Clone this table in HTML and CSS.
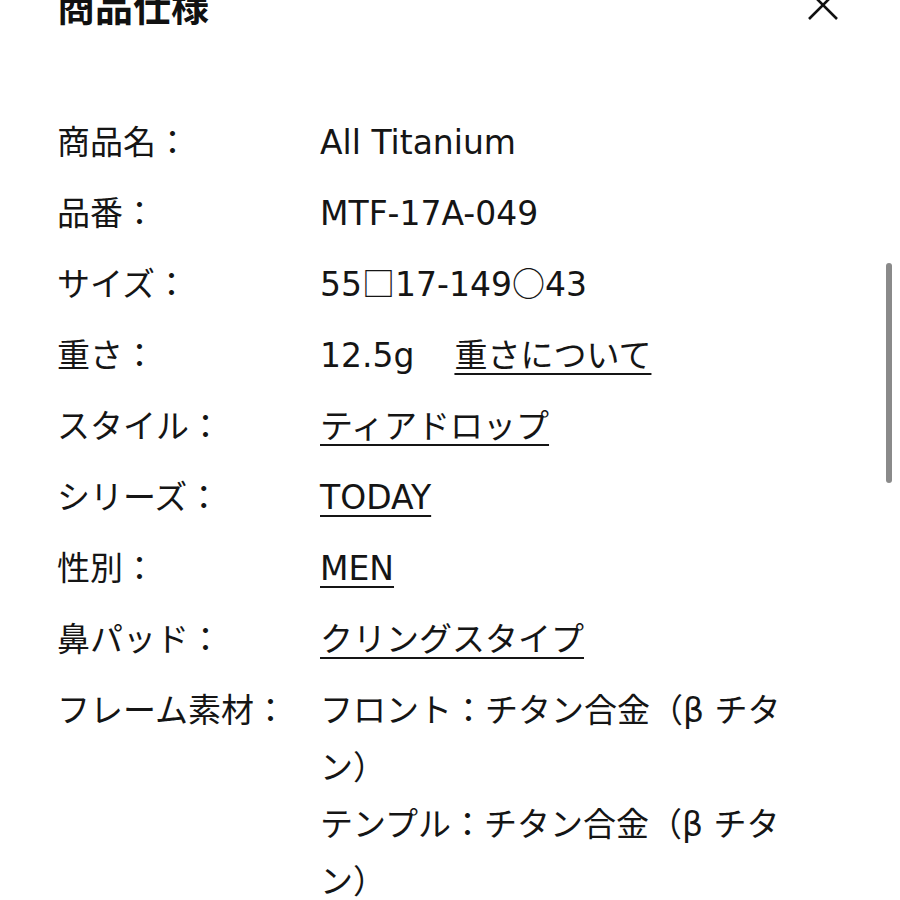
FILE: index.html
```html
<!DOCTYPE html>
<html lang="ja">
<head>
<meta charset="utf-8">
<link rel="stylesheet" href="styles.css">
</head>
<body>
<div class="page">
  <header class="header">
    <h2 class="title">商品仕様</h2>
    <svg class="close" width="30" height="30" viewBox="0 0 30 30" aria-hidden="true">
      <path d="M1 1 L29 29 M29 1 L1 29" stroke="#111" stroke-width="2.6" fill="none"/>
    </svg>
  </header>
  <dl class="spec">
    <div class="row"><dt>商品名：</dt><dd>All Titanium</dd></div>
    <div class="row"><dt>品番：</dt><dd>MTF-17A-049</dd></div>
    <div class="row"><dt>サイズ：</dt><dd>55<span class="sym">□</span>17-149<span class="sym">○</span>43</dd></div>
    <div class="row"><dt>重さ：</dt><dd><span class="weight">12.5g</span><a class="link" href="#">重さについて</a></dd></div>
    <div class="row"><dt>スタイル：</dt><dd><a class="link" href="#">ティアドロップ</a></dd></div>
    <div class="row"><dt>シリーズ：</dt><dd><a class="link" href="#">TODAY</a></dd></div>
    <div class="row"><dt>性別：</dt><dd><a class="link" href="#">MEN</a></dd></div>
    <div class="row"><dt>鼻パッド：</dt><dd><a class="link" href="#">クリングスタイプ</a></dd></div>
    <div class="row"><dt>フレーム素材：</dt><dd>フロント：チタン合金（β チタン）<br>テンプル：チタン合金（β チタン）</dd></div>
  </dl>
</div>
<div class="scrollbar"></div>
</body>
</html>
```

FILE: styles.css
```css
html, body {
  margin: 0;
  padding: 0;
  background: #fff;
  overflow: hidden;
}
body {
  font-family: "DejaVu Sans", "Noto Sans CJK JP", sans-serif;
  color: #151515;
  text-spacing-trim: space-all;
}
.page {
  width: 900px;
  padding: 0 62px 0 57px;
  box-sizing: border-box;
}
.header {
  display: flex;
  justify-content: space-between;
  align-items: center;
  height: 50px;
  margin-top: -20px;
}
.title {
  margin: 0;
  font-family: "Noto Sans CJK JP", sans-serif;
  font-size: 38px;
  font-weight: 700;
  line-height: 50px;
  color: #111;
}
.close {
  display: block;
}
.spec {
  margin: 84px 0 0 0;
  padding: 0;
  display: flex;
  flex-direction: column;
  gap: 14px;
}
.row {
  display: flex;
  font-size: 33px;
  line-height: 57px;
}
.row dt {
  width: 263px;
  flex: none;
  margin: 0;
}
.row dd {
  margin: 0;
  width: 480px;
}
.sym {
  font-family: "Noto Sans CJK JP", sans-serif;
  line-height: 1;
}
.weight {
  margin-right: 40px;
}
.link {
  color: inherit;
  text-decoration: underline;
  text-decoration-thickness: 2px;
  text-underline-offset: 6px;
}
.scrollbar {
  position: fixed;
  left: 886px;
  top: 263px;
  width: 6px;
  height: 220px;
  border-radius: 3px;
  background: #8a8a8a;
}
```
